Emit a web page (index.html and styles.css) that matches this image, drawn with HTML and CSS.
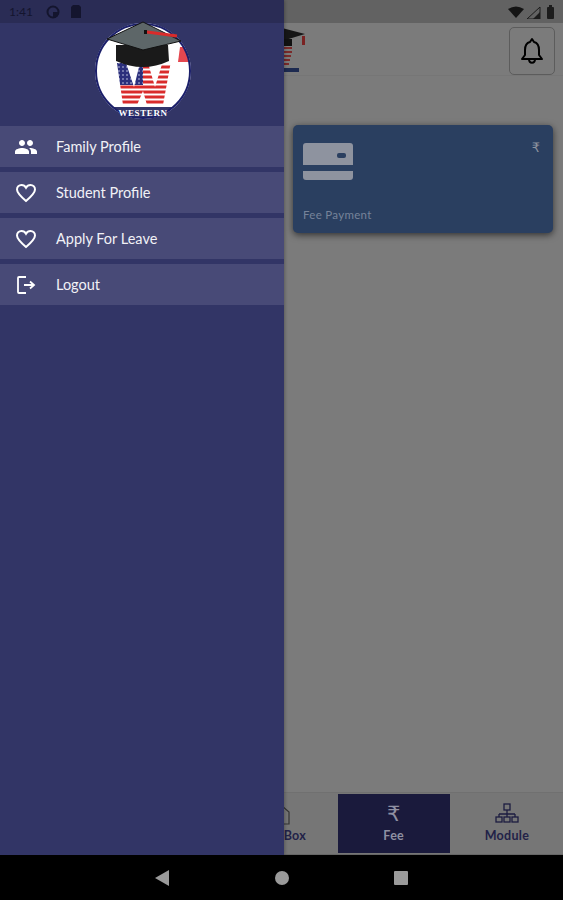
FILE: index.html
```html
<!DOCTYPE html>
<html lang="en">
<head>
<meta charset="UTF-8" />
<meta name="viewport" content="width=device-width, initial-scale=1" />
<title>Fee</title>
<link rel="stylesheet" href="styles.css">
</head>
<body>

<div class="screen">
  <div class="app">
    <div class="status-bar">
      <svg class="status-icons" width="50" height="14" viewBox="0 0 50 14">
        <path d="M1 4 Q9 -1 17 4 L9 13 Z" fill="#141414"/>
        <path d="M33 2 V14 H20 Z" fill="none" stroke="#1c1c1c" stroke-width="1"/>
        <path d="M33 7 V14 H26 Z" fill="#1c1c1c"/>
        <rect x="40" y="2" width="7" height="12" rx="1" fill="#1c1c1c"/>
        <rect x="42" y="0" width="3" height="2" fill="#1c1c1c"/>
      </svg>
    </div>

    <header class="app-header">
      <svg class="app-logo" width="48" height="50" viewBox="0 0 48 50">
        <path d="M2 6 L24 1 L47 7 L24 14 Z" fill="#161616"/>
        <rect x="10" y="12" width="24" height="7" fill="#111"/>
        <rect x="44" y="9" width="3" height="9" fill="#7a2222"/>
        <path d="M24 21 H34 M24 25 H34 M24 29 H33 M24 33 H32 M24 37 H31" stroke="#7a2a2a" stroke-width="2"/>
        <rect x="14" y="41" width="27" height="4" fill="#1d2a50"/>
      </svg>
      <button class="bell-btn" aria-label="Notifications">
        <svg width="24" height="28" viewBox="0 0 24 28" fill="none" stroke="#000" stroke-width="2">
          <path d="M12 2 L14 5 C18 6 19 9 19 13 V18 L22 22 H2 L5 18 V13 C5 9 6 6 10 5 Z" stroke-linejoin="round"/>
          <path d="M9 22 C9 27 15 27 15 22"/>
        </svg>
      </button>
    </header>

    <div class="content">
      <div class="fee-card">
        <div class="fee-top">
          <svg width="50" height="38" viewBox="0 0 50 38">
            <path d="M3 0 H47 Q50 0 50 3 V22 H0 V3 Q0 0 3 0 Z" fill="#8e939f"/>
            <rect x="34" y="10" width="9" height="5" rx="2" fill="#2a3f60"/>
            <path d="M0 28 H50 V34 Q50 37 47 37 H3 Q0 37 0 34 Z" fill="#8e939f"/>
          </svg>
          <span class="rupee-small">₹</span>
        </div>
        <div class="fee-label">Fee Payment</div>
      </div>
    </div>

    <nav class="tabs">
      <div class="tab"><span class="tab-label">Home</span></div>
      <div class="tab"><span class="tab-label">Profile</span></div>
      <div class="tab">
        <svg width="20" height="24" viewBox="0 0 20 24" fill="none" stroke="#333" stroke-width="1.2">
          <path d="M2 10 L10 3 L18 10 V22 H2 Z"/>
        </svg>
        <span class="tab-label">Mail Box</span>
      </div>
      <div class="tab tab-active">
        <span class="rupee-big">₹</span>
        <span class="tab-label">Fee</span>
      </div>
      <div class="tab">
        <svg width="24" height="24" viewBox="0 0 24 24" fill="none" stroke="#1c1c40" stroke-width="1.3">
          <rect x="9" y="2" width="6" height="6"/>
          <path d="M12 8 V12 M4 12 H20 M4 12 V15 M12 12 V15 M20 12 V15"/>
          <rect x="1" y="15" width="6" height="5"/>
          <rect x="9" y="15" width="6" height="5"/>
          <rect x="17" y="15" width="6" height="5"/>
        </svg>
        <span class="tab-label">Module</span>
      </div>
    </nav>

    <div class="nav-bar">
      <svg width="14" height="16" viewBox="0 0 14 16"><path d="M14 0 V16 L0 8 Z" fill="#9a9a9a"/></svg>
      <span class="nav-circle"></span>
      <span class="nav-square"></span>
    </div>
  </div>

  <aside class="drawer">
    <div class="drawer-status">
      <span class="drawer-time">1:41</span>
      <svg width="14" height="14" viewBox="0 0 14 14"><circle cx="7" cy="7" r="5.5" fill="none" stroke="#14152e" stroke-width="2"/><path d="M7 7 H13 A6 6 0 0 1 7 13 Z" fill="#14152e"/></svg>
      <svg width="12" height="13" viewBox="0 0 12 13"><path d="M3 0 H9 L11 2 V13 H1 V2 Z" fill="#14152e"/></svg>
    </div>

    <div class="drawer-head">
      <svg class="school-logo" width="100" height="100" viewBox="0 0 100 100">
        <defs>
          <clipPath id="disc"><circle cx="50" cy="50" r="47"/></clipPath>
          <clipPath id="letter"><path d="M24 42 H33 L41 66 L47 42 H55 L62 66 L70 40 H78 L70 84 H54 L50 70 L44 84 H30 Z"/></clipPath>
          <pattern id="stars" width="4" height="4" patternUnits="userSpaceOnUse">
            <rect width="4" height="4" fill="#2b2f7c"/>
            <circle cx="2" cy="2" r="0.8" fill="#c9cbe6"/>
          </pattern>
        </defs>
        <circle cx="50" cy="50" r="48" fill="#fff"/>
        <g clip-path="url(#disc)">
          <path d="M87 26 L92 26 L98 41 H85 Z" fill="#e4474f"/>
          <g clip-path="url(#letter)">
            <rect x="20" y="38" width="60" height="50" fill="#fff"/>
            <rect x="20" y="38" width="30" height="26" fill="url(#stars)"/>
            <path d="M50 46 H80 M50 51 H80 M50 56 H80 M50 61 H80 M20 66 H80 M20 71 H80 M20 76 H80 M20 81 H80" stroke="#d92b2b" stroke-width="3"/>
          </g>
          <rect x="0" y="86" width="100" height="14" fill="#33366a"/>
        </g>
        <circle cx="50" cy="50" r="47" fill="none" stroke="#1b1f6a" stroke-width="2"/>
        <path d="M23 24 H75 L76 40 Q50 52 23 40 Z" fill="#1a1a1a"/>
        <path d="M50 1 L88 20 L50 29 L14 18 Z" fill="#5d6668" stroke="#111" stroke-width="1"/>
        <path d="M54 11 L84 15" stroke="#d92b2b" stroke-width="3"/>
        <rect x="51" y="9" width="3" height="4" fill="#111"/>
        <text class="logo-text" x="50" y="95" text-anchor="middle">WESTERN</text>
      </svg>
    </div>

    <ul class="menu">
      <li class="menu-item">
        <svg width="24" height="24" viewBox="0 0 24 24" fill="#fff"><path d="M16 11c1.66 0 2.99-1.34 2.99-3S17.66 5 16 5s-3 1.34-3 3 1.34 3 3 3zm-8 0c1.66 0 2.99-1.34 2.99-3S9.66 5 8 5 5 6.34 5 8s1.34 3 3 3zm0 2c-2.33 0-7 1.17-7 3.5V19h14v-2.5C15 14.17 10.33 13 8 13zm8 0c-.29 0-.62.02-.97.05 1.16.84 1.97 1.97 1.97 3.45V19h6v-2.5c0-2.33-4.67-3.5-7-3.5z"/></svg>
        <span>Family Profile</span>
      </li>
      <li class="menu-item">
        <svg width="24" height="24" viewBox="0 0 24 24" fill="none" stroke="#fff" stroke-width="2"><path d="M12 20 C5 14 3 11.500 3 8.500 C3 6 5 4 7.500 4 C9.300 4 11 5 12 6.800 C13 5 14.700 4 16.500 4 C19 4 21 6 21 8.500 C21 11.500 19 14 12 20 Z"/></svg>
        <span>Student Profile</span>
      </li>
      <li class="menu-item">
        <svg width="24" height="24" viewBox="0 0 24 24" fill="none" stroke="#fff" stroke-width="2"><path d="M12 20 C5 14 3 11.500 3 8.500 C3 6 5 4 7.500 4 C9.300 4 11 5 12 6.800 C13 5 14.700 4 16.500 4 C19 4 21 6 21 8.500 C21 11.500 19 14 12 20 Z"/></svg>
        <span>Apply For Leave</span>
      </li>
      <li class="menu-item">
        <svg width="24" height="24" viewBox="0 0 24 24" fill="none" stroke="#fff" stroke-width="1.800"><path d="M12 4 H5 Q4 4 4 5 V19 Q4 20 5 20 H12"/><path d="M10 12 H20 M16 8.500 L20 12 L16 15.500"/></svg>
        <span>Logout</span>
      </li>
    </ul>
  </aside>
</div>

</body>
</html>
```

FILE: styles.css
```css
* {
  box-sizing: border-box;
}
body {
  margin: 0;
  font-family: "Lato", "Open Sans", sans-serif;
  background: #000;
}
.screen {
  position: relative;
  width: 563px;
  height: 900px;
  overflow: hidden;
}
.app {
  display: flex;
  flex-direction: column;
  height: 100%;
  background: #7b7b7b;
}
.status-bar {
  height: 23px;
  flex: none;
  display: flex;
  justify-content: flex-end;
  align-items: center;
  padding-right: 6px;
  background: #626262;
}
.app-header {
  height: 53px;
  flex: none;
  display: flex;
  justify-content: space-between;
  align-items: flex-start;
  padding: 4px 8px 0 258px;
  border-bottom: 1px solid #767676;
}
.bell-btn {
  width: 46px;
  height: 48px;
  display: flex;
  align-items: center;
  justify-content: center;
  padding: 0;
  background: transparent;
  border: 1px solid #5c5c5c;
  border-radius: 5px;
}
.content {
  flex: 1;
  padding: 49px 10px 0 293px;
}
.fee-card {
  height: 108px;
  padding: 18px 13px 12px 10px;
  display: flex;
  flex-direction: column;
  justify-content: space-between;
  background: #2a3f60;
  border-radius: 5px;
  box-shadow: 0 2px 7px rgba(0,0,0,0.6);
}
.fee-top {
  display: flex;
  justify-content: space-between;
  align-items: flex-start;
}
.rupee-small {
  font-size: 13px;
  color: #8e939f;
  margin-top: -3px;
  font-family: "DejaVu Sans", sans-serif;
}
.fee-label {
  font-size: 11.500px;
  letter-spacing: 0.3px;
  color: #76839a;
}
.tabs {
  height: 63px;
  flex: none;
  display: flex;
  padding: 1px 0;
  background: #767676;
  border-top: 1px solid #707070;
  border-bottom: 1px solid #666;
}
.tab {
  flex: 1;
  display: flex;
  flex-direction: column;
  align-items: center;
  justify-content: flex-end;
  gap: 2px;
  padding-bottom: 10px;
  color: #222248;
}
.tab-active {
  margin: 0 1px;
  background: #1a1a3c;
  color: #8f90a2;
}
.tab-label {
  font-size: 12.500px;
  font-weight: 700;
  letter-spacing: 0.3px;
}
.rupee-big {
  font-size: 21px;
  line-height: 24px;
  color: #8f90a2;
  font-family: "DejaVu Sans", sans-serif;
}
.nav-bar {
  height: 45px;
  flex: none;
  display: flex;
  align-items: center;
  gap: 105.500px;
  padding-left: 155px;
  background: #000;
}
.nav-circle {
  width: 14px;
  height: 14px;
  border-radius: 50%;
  background: #9a9a9a;
}
.nav-square {
  width: 14px;
  height: 14px;
  border-radius: 1px;
  background: #9a9a9a;
}

/* Drawer */
.drawer {
  position: absolute;
  left: 0;
  top: 0;
  bottom: 45px;
  width: 284px;
  display: flex;
  flex-direction: column;
  background: #323566;
  box-shadow: 1px 0 3px rgba(0,0,0,0.25);
}
.drawer-status {
  height: 23px;
  flex: none;
  display: flex;
  align-items: center;
  gap: 10px;
  padding-left: 9px;
  background: #2a2c55;
}
.drawer-time {
  font-size: 12px;
  color: #14152e;
  margin-right: 3px;
}
.drawer-head {
  height: 103px;
  flex: none;
  display: flex;
  justify-content: center;
}
.school-logo {
  margin-top: -2px;
  margin-left: 2px;
}
.logo-text {
  font-family: "Liberation Serif", serif;
  font-size: 9px;
  font-weight: 700;
  letter-spacing: 0.6px;
  fill: #fff;
}
.menu {
  list-style: none;
  margin: 0;
  padding: 0;
  display: flex;
  flex-direction: column;
  gap: 5px;
}
.menu-item {
  height: 41px;
  display: flex;
  align-items: center;
  gap: 18px;
  padding-left: 14px;
  background: #484a77;
  color: #f1f1f6;
  font-size: 14.500px;
}
```
